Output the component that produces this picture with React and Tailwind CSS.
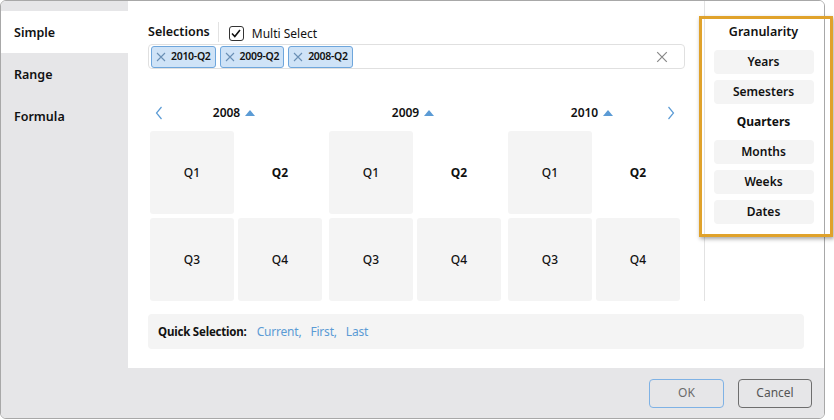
import React from "react";

const font = { fontFamily: '"Noto Sans", "Open Sans", sans-serif' };

function Chevron({ dir }) {
  return (
    <svg width="8" height="14" viewBox="0 0 8 14" fill="none">
      {dir === "left" ? (
        <path d="M6.5 1L1.5 7L6.5 13" stroke="#5b9bd5" strokeWidth="1.2" />
      ) : (
        <path d="M1.5 1L6.5 7L1.5 13" stroke="#5b9bd5" strokeWidth="1.2" />
      )}
    </svg>
  );
}

function Tri() {
  return (
    <svg width="10" height="6" viewBox="0 0 10 6">
      <path d="M0 6L5 0L10 6Z" fill="#5b9bd5" />
    </svg>
  );
}

function XIcon({ size = 9, color = "#6a8fb5", w = 1.1 }) {
  return (
    <svg width={size} height={size} viewBox="0 0 10 10">
      <path d="M1 1L9 9M9 1L1 9" stroke={color} strokeWidth={w} />
    </svg>
  );
}

function Tag({ label }) {
  return (
    <div className="flex items-center h-[22px] pl-[4px] pr-[4px] gap-[5px] bg-[#cfe3f7] border border-[#6ea6dc] rounded-[3px]">
      <XIcon size={10} />
      <span className="text-[10.5px] font-semibold text-[#111] leading-none tracking-[-0.3px]">{label}</span>
    </div>
  );
}

function YearGroup({ year, left, right }) {
  const cells = ["Q1", "Q2", "Q3", "Q4"];
  return (
    <div className="w-[172px] flex flex-col">
      <div className="h-[20px] flex items-center justify-between">
        <div className="w-[14px] flex justify-center pl-[4px]">{left && <Chevron dir="left" />}</div>
        <div className="flex items-center gap-[5px] pr-[4px]">
          <span className="text-[12px] font-semibold text-[#111]">{year}</span>
          <Tri />
        </div>
        <div className="w-[14px] flex justify-center pr-[4px]">{right && <Chevron dir="right" />}</div>
      </div>
      <div className="mt-[8px] grid grid-cols-2 gap-[4px]">
        {cells.map((q) => (
          <div
            key={q}
            className={
              "h-[83px] flex items-center justify-center rounded-[3px] text-[12px] text-[#111] " +
              (q === "Q2" ? "bg-white font-bold" : "bg-[#f4f4f4] font-medium")
            }
          >
            {q}
          </div>
        ))}
      </div>
    </div>
  );
}

function GranBtn({ label, active }) {
  return (
    <div
      className={
        "h-[24px] w-[100px] flex items-center justify-center rounded-[4px] text-[12px] text-[#111] " +
        (active ? "bg-white font-bold" : "bg-[#f4f4f4] font-semibold")
      }
    >
      {label}
    </div>
  );
}

export default function App() {
  return (
    <div className="relative w-[834px] h-[420px] bg-white" style={font}>
      <div className="w-[825px] h-[419px] border border-[#a8a8a8] rounded-[6px] overflow-hidden flex flex-col">
        <div className="flex h-[367px]">
          <div className="w-[127px] bg-[#e6e6e8] pt-[10px] flex flex-col">
            <div className="h-[42px] bg-white flex items-center px-[13px] pt-[3px] text-[12.5px] font-semibold text-[#111]">Simple</div>
            <div className="h-[42px] flex items-center px-[13px] pt-[3px] text-[12.5px] font-semibold text-[#111]">Range</div>
            <div className="h-[42px] flex items-center px-[13px] pt-[3px] text-[12.5px] font-semibold text-[#111]">Formula</div>
          </div>
          <div className="flex-1 bg-white flex flex-col">
            <div className="flex h-[300px]">
              <div className="w-[576px] pl-[20px] pr-[19px] pt-[21px] flex flex-col">
                <div className="flex items-center h-[20px]">
                  <span className="text-[12.5px] font-semibold text-[#111]">Selections</span>
                  <div className="w-px h-[20px] bg-[#e2e2e2] ml-[8px]"></div>
                  <div className="ml-[10px] w-[15px] h-[15px] border-[1.5px] border-[#333] rounded-[3px] flex items-center justify-center bg-white mt-[3px]">
                    <svg width="10" height="9" viewBox="0 0 10 9">
                      <path d="M1 4.5L3.8 7.5L9 1" stroke="#111" strokeWidth="1.6" fill="none" />
                    </svg>
                  </div>
                  <span className="ml-[8px] text-[12px] text-[#111] mt-[3px]">Multi Select</span>
                </div>
                <div className="mt-[2px] h-[28px] border border-[#e0e0e0] rounded-[4px] flex items-center pl-[2px] pr-[16px] gap-[4px]">
                  <Tag label="2010-Q2" />
                  <Tag label="2009-Q2" />
                  <Tag label="2008-Q2" />
                  <div className="flex-1"></div>
                  <XIcon size={12} color="#888" w={1} />
                </div>
                <div className="mt-[34px] flex gap-[7px] ml-[2px]">
                  <YearGroup year="2008" left />
                  <YearGroup year="2009" />
                  <YearGroup year="2010" right />
                </div>
              </div>
              <div className="flex-1 border-l border-[#e2e2e2] flex flex-col items-center pt-[21px] pr-[2px]">
                <div className="h-[20px] flex items-center text-[12.5px] font-semibold text-[#111]">Granularity</div>
                <div className="mt-[8px] flex flex-col gap-[6px]">
                  <GranBtn label="Years" />
                  <GranBtn label="Semesters" />
                  <GranBtn label="Quarters" active />
                  <GranBtn label="Months" />
                  <GranBtn label="Weeks" />
                  <GranBtn label="Dates" />
                </div>
              </div>
            </div>
            <div className="mt-[13px] ml-[20px] w-[656px] h-[35px] bg-[#f4f4f4] rounded-[4px] flex items-center px-[10px] text-[12px]">
              <span className="font-bold text-[#111] text-[11.5px] tracking-[-0.2px]">Quick Selection:</span>
              <span className="ml-[10px] text-[#5b9bd5] tracking-[-0.2px]">Current,</span>
              <span className="ml-[9px] text-[#5b9bd5] tracking-[-0.2px]">First,</span>
              <span className="ml-[9px] text-[#5b9bd5] tracking-[-0.2px]">Last</span>
            </div>
          </div>
        </div>
        <div className="flex-1 bg-[#e6e6e8] flex items-center justify-end gap-[14px] pr-[12px]">
          <div className="w-[75px] h-[29px] border border-[#7fb2e5] rounded-[4px] flex items-center justify-center text-[12px] text-[#6b6b6b]">OK</div>
          <div className="w-[74px] h-[29px] border border-[#6e6e6e] rounded-[4px] flex items-center justify-center text-[12px] text-[#555]">Cancel</div>
        </div>
      </div>
      <div className="absolute left-[699px] top-[16px] w-[134px] h-[221px] border-[3px] border-[#e0a22b] shadow-[1px_2px_4px_rgba(0,0,0,0.35)] pointer-events-none"></div>
    </div>
  );
}
